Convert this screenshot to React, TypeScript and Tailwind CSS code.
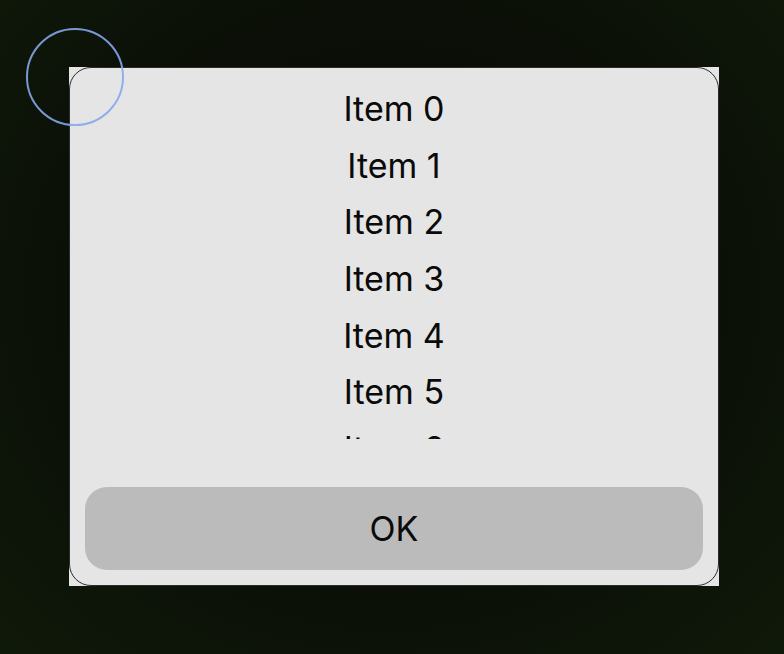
import React from "react";

const items = Array.from({ length: 7 }, (_, i) => `Item ${i}`);

export default function App() {
  return (
    <div
      className="relative h-[654px] w-full overflow-hidden bg-[#0b0e07] pl-[69px] pt-[67px]"
      style={{
        backgroundImage:
          "radial-gradient(ellipse at 50% 45%, #080a05 0%, #0b0f07 55%, #0f1909 100%)",
        fontFamily: "Inter, 'Liberation Sans', sans-serif",
      }}
    >
      {/* picker sheet */}
      <div className="h-[519px] w-[650px] bg-[#e5e5e5]">
        <div className="flex h-full flex-col rounded-[22px] border border-[#2b2b2b] bg-[#e5e5e5]">
          <div className="h-[371px] overflow-hidden pt-[13px]">
            {items.map((label) => (
              <div
                key={label}
                className="flex h-[56.6px] items-center justify-center text-[34px] leading-none text-[#0a0a0a]"
              >
                {label}
              </div>
            ))}
          </div>
          <div className="mt-auto px-[15px] pb-[15px]">
            <button className="flex h-[83px] w-full items-center justify-center rounded-[22px] bg-[#bbbbbb] text-[34px] leading-none text-[#0a0a0a]">
              OK
            </button>
          </div>
        </div>
      </div>

      {/* touch indicator */}
      <div className="absolute left-[26px] top-[28px] h-[98px] w-[98px] rounded-full border-2 border-[#86a6ec] opacity-90" />
    </div>
  );
}
